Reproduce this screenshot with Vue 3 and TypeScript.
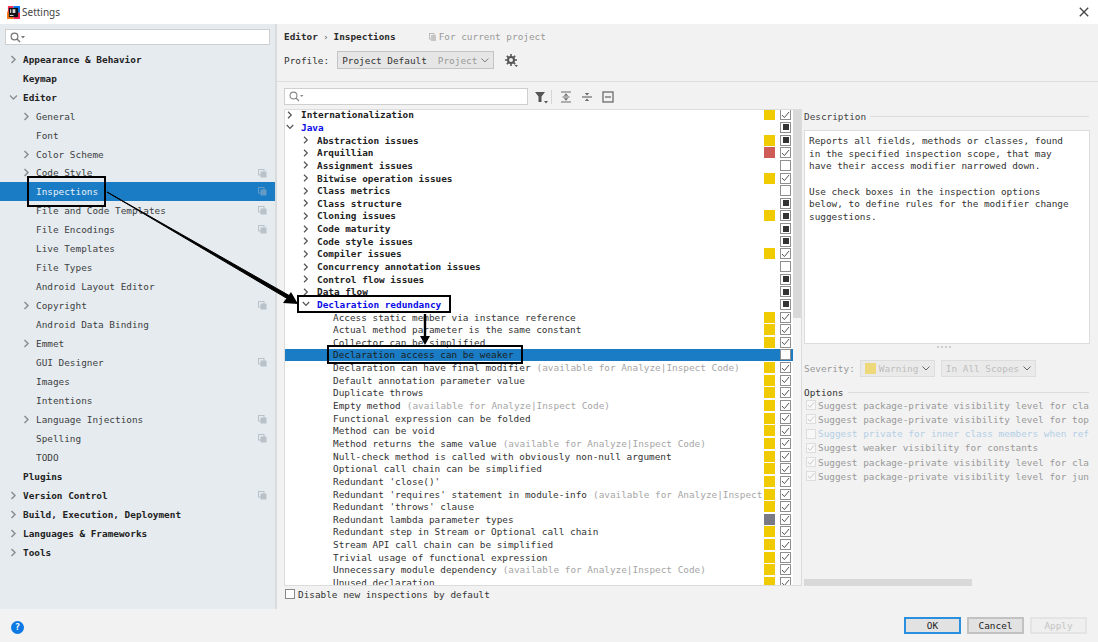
<script setup lang="ts">
interface NavItem {
  label: string
  level: number
  arrow?: 'right' | 'down'
  copy?: boolean
  active?: boolean
}

interface TreeRow {
  label: string
  hint?: string
  level: number
  arrow?: 'right' | 'down'
  sev?: 'warn' | 'error' | 'weak'
  check: 'on' | 'off' | 'mixed'
  blue?: boolean
  active?: boolean
}

const nav: NavItem[] = [
  { label: 'Appearance & Behavior', level: 0, arrow: 'right' },
  { label: 'Keymap', level: 0 },
  { label: 'Editor', level: 0, arrow: 'down' },
  { label: 'General', level: 1, arrow: 'right' },
  { label: 'Font', level: 1 },
  { label: 'Color Scheme', level: 1, arrow: 'right' },
  { label: 'Code Style', level: 1, arrow: 'right', copy: true },
  { label: 'Inspections', level: 1, copy: true, active: true },
  { label: 'File and Code Templates', level: 1, copy: true },
  { label: 'File Encodings', level: 1, copy: true },
  { label: 'Live Templates', level: 1 },
  { label: 'File Types', level: 1 },
  { label: 'Android Layout Editor', level: 1 },
  { label: 'Copyright', level: 1, arrow: 'right', copy: true },
  { label: 'Android Data Binding', level: 1 },
  { label: 'Emmet', level: 1, arrow: 'right' },
  { label: 'GUI Designer', level: 1, copy: true },
  { label: 'Images', level: 1 },
  { label: 'Intentions', level: 1 },
  { label: 'Language Injections', level: 1, arrow: 'right', copy: true },
  { label: 'Spelling', level: 1, copy: true },
  { label: 'TODO', level: 1 },
  { label: 'Plugins', level: 0 },
  { label: 'Version Control', level: 0, arrow: 'right', copy: true },
  { label: 'Build, Execution, Deployment', level: 0, arrow: 'right' },
  { label: 'Languages & Frameworks', level: 0, arrow: 'right' },
  { label: 'Tools', level: 0, arrow: 'right' },
]

const analyze = '(available for Analyze|Inspect Code)'

const rows: TreeRow[] = [
  { label: 'Internationalization', level: 0, arrow: 'right', sev: 'warn', check: 'on' },
  { label: 'Java', level: 0, arrow: 'down', check: 'mixed', blue: true },
  { label: 'Abstraction issues', level: 1, arrow: 'right', sev: 'warn', check: 'mixed' },
  { label: 'Arquillian', level: 1, arrow: 'right', sev: 'error', check: 'on' },
  { label: 'Assignment issues', level: 1, arrow: 'right', check: 'off' },
  { label: 'Bitwise operation issues', level: 1, arrow: 'right', sev: 'warn', check: 'on' },
  { label: 'Class metrics', level: 1, arrow: 'right', check: 'off' },
  { label: 'Class structure', level: 1, arrow: 'right', check: 'mixed' },
  { label: 'Cloning issues', level: 1, arrow: 'right', sev: 'warn', check: 'mixed' },
  { label: 'Code maturity', level: 1, arrow: 'right', check: 'mixed' },
  { label: 'Code style issues', level: 1, arrow: 'right', check: 'mixed' },
  { label: 'Compiler issues', level: 1, arrow: 'right', sev: 'warn', check: 'on' },
  { label: 'Concurrency annotation issues', level: 1, arrow: 'right', check: 'off' },
  { label: 'Control flow issues', level: 1, arrow: 'right', check: 'mixed' },
  { label: 'Data flow', level: 1, arrow: 'right', check: 'mixed' },
  { label: 'Declaration redundancy', level: 1, arrow: 'down', check: 'mixed', blue: true },
  { label: 'Access static member via instance reference', level: 2, sev: 'warn', check: 'on' },
  { label: 'Actual method parameter is the same constant', level: 2, sev: 'warn', check: 'on' },
  { label: 'Collector can be simplified', level: 2, sev: 'warn', check: 'on' },
  { label: 'Declaration access can be weaker', level: 2, check: 'off', active: true },
  { label: 'Declaration can have final modifier', hint: analyze, level: 2, sev: 'warn', check: 'on' },
  { label: 'Default annotation parameter value', level: 2, sev: 'warn', check: 'on' },
  { label: 'Duplicate throws', level: 2, sev: 'warn', check: 'on' },
  { label: 'Empty method', hint: analyze, level: 2, sev: 'warn', check: 'on' },
  { label: 'Functional expression can be folded', level: 2, sev: 'warn', check: 'on' },
  { label: 'Method can be void', level: 2, sev: 'warn', check: 'on' },
  { label: 'Method returns the same value', hint: analyze, level: 2, sev: 'warn', check: 'on' },
  { label: 'Null-check method is called with obviously non-null argument', level: 2, sev: 'warn', check: 'on' },
  { label: 'Optional call chain can be simplified', level: 2, sev: 'warn', check: 'on' },
  { label: "Redundant 'close()'", level: 2, sev: 'warn', check: 'on' },
  { label: "Redundant 'requires' statement in module-info", hint: '(available for Analyze|Inspect', level: 2, sev: 'warn', check: 'on' },
  { label: "Redundant 'throws' clause", level: 2, sev: 'warn', check: 'on' },
  { label: 'Redundant lambda parameter types', level: 2, sev: 'weak', check: 'on' },
  { label: 'Redundant step in Stream or Optional call chain', level: 2, sev: 'warn', check: 'on' },
  { label: 'Stream API call chain can be simplified', level: 2, sev: 'warn', check: 'on' },
  { label: 'Trivial usage of functional expression', level: 2, sev: 'warn', check: 'on' },
  { label: 'Unnecessary module dependency', hint: analyze, level: 2, sev: 'warn', check: 'on' },
  { label: 'Unused declaration', level: 2, sev: 'warn', check: 'on' },
]

const options = [
  { label: 'Suggest package-private visibility level for cla', on: true },
  { label: 'Suggest package-private visibility level for top', on: true },
  { label: 'Suggest private for inner class members when ref', on: false },
  { label: 'Suggest weaker visibility for constants', on: true },
  { label: 'Suggest package-private visibility level for cla', on: true },
  { label: 'Suggest package-private visibility level for jun', on: true },
]
</script>

<template>
  <div class="window">
    <header class="titlebar">
      <svg class="logo" width="13" height="13" viewBox="0 0 14 14">
        <rect x="1" y="0" width="6" height="7" fill="#fe315d" />
        <rect x="7" y="0" width="7" height="8" fill="#087cfa" />
        <rect x="0" y="6" width="7" height="8" fill="#fe7a1b" />
        <rect x="7" y="7" width="7" height="7" fill="#fe2857" />
        <rect x="2" y="2" width="10" height="10" fill="#111" />
        <rect x="3" y="9.6" width="4" height="1" fill="#fff" />
        <rect x="3.5" y="3.5" width="1" height="4" fill="#fff" />
        <rect x="6" y="3.5" width="3" height="4" fill="#fff" opacity=".85" />
      </svg>
      <span class="title">Settings</span>
      <svg class="close" width="10" height="10" viewBox="0 0 10 10">
        <path d="M.8.8l8.4 8.4M9.2.8L.8 9.2" stroke="#444" stroke-width="1.3" fill="none" />
      </svg>
    </header>

    <div class="body">
      <aside class="sidebar">
        <div class="searchbox nav-search">
          <svg width="15" height="11" viewBox="0 0 15 11">
            <circle cx="4.5" cy="4.5" r="3.4" fill="none" stroke="#777" stroke-width="1.2" />
            <path d="M7 7l3 3" stroke="#777" stroke-width="1.4" />
            <path d="M11 4h4l-2 2.4z" fill="#777" />
          </svg>
        </div>
        <ul class="nav">
          <li v-for="item in nav" :key="item.label" class="nav-row" :class="{ active: item.active, top: item.level === 0 }">
            <span class="nav-arrow" :class="'lv' + item.level">
              <svg v-if="item.arrow === 'right'" width="7" height="9" viewBox="0 0 7 9"><path d="M1.5 1l3.5 3.5L1.5 8" fill="none" stroke="#8b8f93" stroke-width="1.5" /></svg>
              <svg v-else-if="item.arrow === 'down'" width="9" height="7" viewBox="0 0 9 7"><path d="M1 1.5l3.5 3.5L8 1.5" fill="none" stroke="#8b8f93" stroke-width="1.3" /></svg>
            </span>
            <span class="nav-label">{{ item.label }}</span>
            <svg v-if="item.copy" class="copy" width="9" height="9" viewBox="0 0 9 9">
              <rect x=".5" y=".5" width="5.5" height="5.5" fill="none" stroke="#b9c2c9" />
              <rect x="2.5" y="2.5" width="6" height="6" fill="#b9c2c9" />
            </svg>
          </li>
        </ul>
      </aside>

      <main class="content">
        <div class="crumbs">
          <b>Editor</b><span class="crumb-sep">›</span><b>Inspections</b>
          <span class="scope">
            <svg width="7" height="8" viewBox="0 0 7 8"><rect x=".5" y=".5" width="4.5" height="5.5" fill="none" stroke="#bbb" /><rect x="2" y="2" width="5" height="6" fill="#c6c6c6" /></svg>
            For current project
          </span>
        </div>

        <div class="profile">
          <span>Profile:</span>
          <div class="combo profile-combo">
            <span>Project Default</span>
            <span class="muted">Project</span>
            <svg width="8" height="5" viewBox="0 0 8 5"><path d="M.5.5L4 4 7.5.5" fill="none" stroke="#777" /></svg>
          </div>
          <svg class="gear" width="13" height="13" viewBox="0 0 13 13">
            <circle cx="6" cy="6" r="3" fill="none" stroke="#555" stroke-width="2" />
            <path d="M6 0v2.5M6 9.5V12M0 6h2.5M9.5 6H12M1.8 1.8l1.8 1.8M8.4 8.4l1.8 1.8M10.2 1.8L8.4 3.6M3.6 8.4l-1.8 1.8" stroke="#555" stroke-width="1.6" />
            <path d="M9.5 11h3.5l-1.75 2z" fill="#555" />
          </svg>
        </div>

        <div class="rule"></div>

        <div class="toolbar">
          <div class="searchbox tree-search">
            <svg width="15" height="11" viewBox="0 0 15 11">
              <circle cx="4.5" cy="4.5" r="3.4" fill="none" stroke="#888" stroke-width="1.1" />
              <path d="M7 7l3 3" stroke="#888" stroke-width="1.3" />
              <path d="M11 4h3.5l-1.75 2z" fill="#888" />
            </svg>
          </div>
          <div class="tools">
            <svg width="14" height="14" viewBox="0 0 14 14">
              <path d="M1 2h10L7.5 6.5V12h-3V6.5z" fill="#555" />
              <path d="M10 11h4l-2 2.4z" fill="#555" />
            </svg>
            <span class="tool-sep"></span>
            <svg width="12" height="12" viewBox="0 0 12 12">
              <path d="M1 1h10M1 11h10M2.5 6h7" fill="none" stroke="#6b6b6b" stroke-width="1.2" />
              <path d="M6 2.2L8.2 4.8H3.8zM6 9.8L3.8 7.2h4.4z" fill="#6b6b6b" />
            </svg>
            <svg width="12" height="12" viewBox="0 0 12 12">
              <path d="M1 6h10" fill="none" stroke="#6b6b6b" stroke-width="1.2" />
              <path d="M6 4.6L3.8 2h4.4zM6 7.4L8.2 10H3.8z" fill="#6b6b6b" />
            </svg>
            <svg width="12" height="12" viewBox="0 0 12 12">
              <rect x="1" y="1" width="10" height="10" fill="none" stroke="#6b6b6b" stroke-width="1.3" />
              <path d="M3 6h6" stroke="#6b6b6b" stroke-width="1.3" />
            </svg>
          </div>
        </div>

        <div class="panels">
          <section class="tree">
            <div class="tree-rows">
              <div v-for="row in rows" :key="row.label" class="tree-row" :class="{ active: row.active }">
                <span class="tree-arrow" :class="'lv' + row.level">
                  <svg v-if="row.arrow === 'right'" width="6" height="8" viewBox="0 0 6 8"><path d="M1 .8L4.3 4 1 7.2" fill="none" stroke="#555" stroke-width="1.2" /></svg>
                  <svg v-else-if="row.arrow === 'down'" width="8" height="6" viewBox="0 0 8 6"><path d="M.8 1L4 4.3 7.2 1" fill="none" stroke="#555" stroke-width="1.2" /></svg>
                </span>
                <span class="tree-label" :class="{ bold: row.level < 2, blue: row.blue }">{{ row.label }}</span>
                <span v-if="row.hint" class="tree-hint">{{ row.hint }}</span>
                <span class="sev" :class="row.sev"></span>
                <span class="check" :class="row.check">
                  <svg v-if="row.check === 'on'" width="9" height="8" viewBox="0 0 9 8"><path d="M1 4l2.4 2.6L8 1" fill="none" stroke="#555" stroke-width="1" /></svg>
                </span>
              </div>
            </div>
            <div class="vscroll"><div class="vthumb"></div></div>
          </section>

          <section class="side">
            <div class="group-title"><span>Description</span><i></i></div>
            <div class="desc">
              <p>Reports all fields, methods or classes, found<br />in the specified inspection scope, that may<br />have their access modifier narrowed down.</p>
              <p>Use check boxes in the inspection options<br />below, to define rules for the modifier change<br />suggestions.</p>
            </div>
            <div class="grip"></div>
            <div class="severity">
              <span>Severity:</span>
              <div class="combo sev-combo"><span class="swatch"></span><span>Warning</span><svg width="8" height="5" viewBox="0 0 8 5"><path d="M.5.5L4 4 7.5.5" fill="none" stroke="#666" /></svg></div>
              <div class="combo scope-combo"><span>In All Scopes</span><svg width="8" height="5" viewBox="0 0 8 5"><path d="M.5.5L4 4 7.5.5" fill="none" stroke="#666" /></svg></div>
            </div>
            <div class="group-title options-title"><span>Options</span><i></i></div>
            <div class="options">
              <div v-for="(opt, i) in options" :key="i" class="option" :class="{ faint: !opt.on }">
                <span class="opt-box">
                  <svg v-if="opt.on" width="9" height="8" viewBox="0 0 9 8"><path d="M1 4l2.4 2.6L8 1" fill="none" stroke="#c2c2c2" stroke-width="1" /></svg>
                </span>
                <span class="opt-label">{{ opt.label }}</span>
              </div>
            </div>
            <div class="hscroll"></div>
          </section>
        </div>

        <label class="default-check"><span class="plain-box"></span>Disable new inspections by default</label>
      </main>
    </div>

    <footer class="footer">
      <span class="help">?</span>
      <div class="buttons">
        <button class="btn primary">OK</button>
        <button class="btn">Cancel</button>
        <button class="btn disabled">Apply</button>
      </div>
    </footer>

    <!-- annotations drawn on top of the screenshot -->
    <svg class="notes" width="1098" height="642" viewBox="0 0 1098 642">
      <g fill="none" stroke="#000" stroke-width="2">
        <rect x="28" y="177" width="77" height="29" />
        <rect x="298" y="296" width="152" height="16" />
        <rect x="328" y="346" width="194" height="17" />
      </g>
      <path d="M107 192L288 299L290 296L107 192z" fill="#000" stroke="#000" stroke-width="1" />
      <path d="M298 304L283 303L291 292z" fill="#000" />
      <path d="M425 314v24" stroke="#000" stroke-width="2.4" />
      <path d="M420 336h10l-5 9z" fill="#000" />
    </svg>
  </div>
</template>

<style>
html, body { margin: 0; background: #f2f2f2; }
</style>

<style scoped>
.window {
  position: relative;
  width: 1098px;
  height: 642px;
  overflow: hidden;
  display: flex;
  flex-direction: column;
  background: #f2f2f2;
  font-family: "DejaVu Sans Mono", "Liberation Mono", monospace;
  font-size: 9.4px;
  color: #333;
}
.titlebar {
  height: 24px;
  flex: none;
  background: #fff;
  display: flex;
  align-items: center;
  padding: 0 9px 0 7px;
}
.title {
  font-family: "Noto Sans", "Open Sans", sans-serif;
  font-size: 10px;
  color: #444;
  margin-left: 2px;
}
.close { margin-left: auto; }
.logo { flex: none; }

.body { flex: 1; display: flex; min-height: 0; }

.sidebar {
  width: 275px;
  flex: none;
  background: #e6ebf0;
  border-right: 2px solid #d9dcdf;
  box-sizing: content-box;
  padding-top: 5px;
}
.searchbox {
  height: 16px;
  box-sizing: border-box;
  background: #fff;
  border: 1px solid #cfcfcf;
  display: flex;
  align-items: center;
  padding-left: 4px;
}
.nav-search { margin: 0 5px; width: 265px; }
.nav { list-style: none; margin: 4.8px 0 0; padding: 0; }
.nav-row {
  height: 18.96px;
  display: flex;
  align-items: center;
  position: relative;
  color: #3c3f41;
}
.nav-row.top { font-weight: 700; color: #222; }
.nav-row.active { background: #1a7cc4; color: #e8f2fa; }
.nav-row.active .copy { opacity: 0.45; }
.nav-arrow { display: flex; align-items: center; justify-content: center; width: 9px; flex: none; }
.nav-arrow.lv0 { margin: 0 5px 0 9px; }
.nav-arrow.lv1 { margin: 0 5px 0 22px; }
.copy { position: absolute; right: 8px; top: 5px; }

.content { flex: 1; min-width: 0; padding-left: 7px; display: flex; flex-direction: column; }
.crumbs { display: flex; align-items: center; height: 11px; margin-top: 7px; color: #333; }
.crumbs b { color: #2b2b2b; }
.crumb-sep { margin: 0 5px; color: #666; }
.scope { margin-left: 33px; color: #9a9a9a; display: flex; align-items: center; gap: 3px; }

.profile { display: flex; align-items: center; margin-top: 9px; height: 18px; }
.combo {
  display: flex;
  align-items: center;
  box-sizing: border-box;
  border: 1px solid #c4c4c4;
  background: #e6e6e6;
  white-space: nowrap;
}
.profile-combo { width: 157px; height: 18px; margin-left: 8px; padding: 0 4px; flex: none; }
.profile-combo .muted { color: #999; margin-left: 11px; }
.profile-combo svg { margin-left: 4px; }
.gear { margin-left: 11px; }
.rule { height: 1px; background: #dedede; margin: 12px 0 0 -7px; }

.toolbar { display: flex; align-items: center; height: 19px; margin-top: 5px; }
.tree-search { width: 244px; height: 17px; }
.tools { display: flex; align-items: center; margin-left: 6px; gap: 9px; }
.tool-sep { width: 1px; height: 14px; background: #d6d6d6; margin: 0 -1px 0 -6px; }

.panels { display: flex; margin-top: 3px; height: 477px; }
.tree {
  width: 518px;
  flex: none;
  box-sizing: border-box;
  background: #fff;
  border: 1px solid #dcdcdc;
  display: flex;
  overflow: hidden;
}
/* the list is scrolled a little, its first row is clipped by the panel */
.tree-rows { flex: 1; min-width: 0; margin-top: -1.5px; }
.tree-row {
  height: 12.65px;
  display: flex;
  align-items: center;
  position: relative;
  color: #333;
  white-space: nowrap;
}
.tree-row.active { background: #1a7cc4; color: #1c1c1c; }
.tree-arrow { width: 8px; display: flex; justify-content: center; flex: none; margin-right: 7px; }
.tree-arrow.lv0 { margin-left: 1px; }
.tree-arrow.lv1 { margin-left: 17px; }
.tree-arrow.lv2 { margin-left: 33px; }
.tree-label.bold { font-weight: 700; color: #222; }
.tree-label.blue { color: #0a0ae6; }
.tree-hint { color: #a6a6a6; margin-left: 6px; }
.sev {
  position: absolute;
  left: 479px;
  top: 0.8px;
  width: 11px;
  height: 11px;
}
.sev.warn { background: #f0cb00; }
.sev.error { background: #cf5b56; }
.sev.weak { background: #7a7a85; }
.check {
  position: absolute;
  left: 495px;
  top: 0.8px;
  width: 11px;
  height: 11px;
  box-sizing: border-box;
  border: 1.5px solid #8f8f8f;
  background: #fff;
  display: flex;
  align-items: center;
  justify-content: center;
}
.check.mixed::after { content: ""; width: 6px; height: 6px; background: #333; flex: none; }
.vscroll { width: 8px; flex: none; background: #f5f5f5; }
.vthumb { height: 208px; background: #d9d9d9; }

.side { flex: 1; min-width: 0; position: relative; display: flex; flex-direction: column; padding-left: 2px; }
.group-title { display: flex; align-items: center; height: 11px; color: #444; margin-top: 2px; }
.group-title i { flex: 1; height: 1px; background: #dcdcdc; margin: 0 9px 0 4px; }
.desc {
  margin-top: 8px;
  height: 214px;
  width: 286px;
  box-sizing: border-box;
  border: 1px solid #dcdcdc;
  background: #fff;
  padding: 4px 4px;
  line-height: 12.67px;
  color: #333;
}
.desc p { margin: 0 0 12.67px; }
.grip { height: 5px; width: 14px; margin: 2px auto 0; border-top: 2px dotted #ccc; transform: translateX(-7px); }
.severity { display: flex; align-items: center; margin-top: 6px; color: #999; height: 18px; }
.severity .combo { height: 17px; background: #eaeaea; border-color: #ddd; color: #bdbdbd; padding: 0 4px; }
.sev-combo { width: 75px; margin-left: 5px; }
.scope-combo { width: 95px; margin-left: 6px; }
.severity svg { margin-left: auto; }
.swatch { width: 11px; height: 11px; background: #eed97a; margin-right: 3px; }
.options-title { margin-top: 10px; color: #333; }
.options { margin-top: 0; }
.option { display: flex; align-items: center; height: 14.25px; color: #999; white-space: nowrap; width: 286px; overflow: hidden; }
.option.faint { color: #b4cfe6; }
.opt-box {
  width: 10px;
  height: 10px;
  flex: none;
  box-sizing: border-box;
  border: 1px solid #ddd;
  background: #f8f8f8;
  display: flex;
  align-items: center;
  justify-content: center;
  margin: 0 2px 0 2px;
}
.hscroll { position: absolute; left: 2px; bottom: 0; width: 168px; height: 7px; background: #d9d9d9; }

.default-check { display: flex; align-items: center; gap: 3px; margin: 1px 0 0 1px; height: 14px; color: #333; }
.plain-box { width: 10px; height: 10px; border: 1px solid #888; background: #fff; box-sizing: border-box; display: block; }

.footer {
  height: 33px;
  flex: none;
  display: flex;
  align-items: center;
  padding: 0 11px 0 11px;
  background: #f2f2f2;
}
.help {
  width: 13px;
  height: 13px;
  margin-top: 3px;
  border-radius: 50%;
  background: #0b78e3;
  color: #fff;
  font-size: 9px;
  font-weight: 700;
  display: flex;
  align-items: center;
  justify-content: center;
}
.buttons { margin-left: auto; display: flex; gap: 6px; }
.btn {
  width: 57px;
  height: 17px;
  padding: 0;
  font: inherit;
  color: #222;
  background: #e2e2e2;
  border: 2px solid #c2c2c2;
}
.btn.primary { border-color: #2a8fdc; }
.btn.disabled { background: #efefef; border-color: #e4e4e4; color: #c4c4c4; }

.notes { position: absolute; left: 0; top: 0; pointer-events: none; }
</style>
